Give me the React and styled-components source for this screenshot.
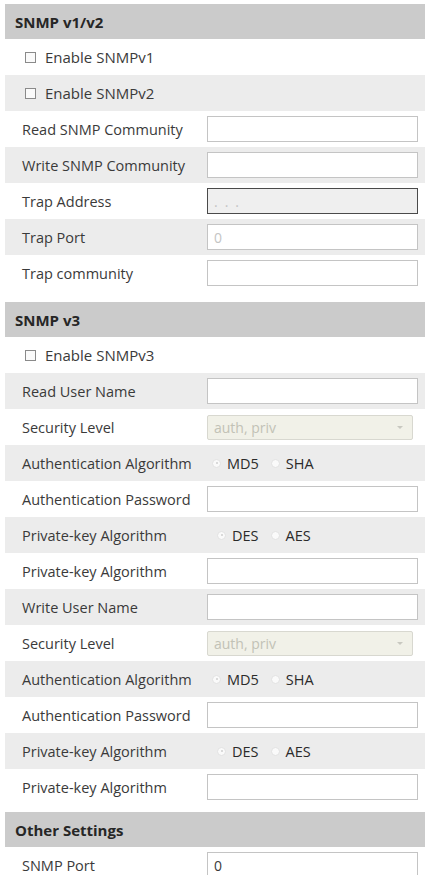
import React from "react";
import styled, { createGlobalStyle } from "styled-components";

const GlobalStyle = createGlobalStyle`
  body {
    margin: 0;
    background: #ffffff;
    font-family: "Open Sans", "Noto Sans", sans-serif;
    color: #3a3a3a;
  }
`;

const Page = styled.div`
  width: 420px;
  padding: 4px 0 0 5px;
  display: flex;
  flex-direction: column;
`;

const Section = styled.section`
  display: flex;
  flex-direction: column;
  margin-bottom: ${(p) => p.gap || 8}px;
`;

const Header = styled.div`
  height: 35px;
  display: flex;
  align-items: center;
  padding-left: 10px;
  background: #cbcbcb;
  font-size: 15px;
  font-weight: 700;
  color: #262626;
`;

const Row = styled.div`
  height: 36px;
  display: grid;
  grid-template-columns: 185px 211px;
  align-items: center;
  padding-left: 17px;
  background: ${(p) => (p.shaded ? "#ececec" : "#ffffff")};
  font-size: 14.5px;
`;

const CheckRow = styled.label`
  height: 36px;
  display: flex;
  align-items: center;
  gap: 9px;
  padding-left: 20px;
  background: ${(p) => (p.shaded ? "#ececec" : "#ffffff")};
  font-size: 15px;
  color: #3a3a3a;
`;

const Box = styled.span`
  width: 11px;
  height: 11px;
  border: 1px solid #8a8a8a;
  background: #fafafa;
  box-sizing: border-box;
`;

const Label = styled.span`
  white-space: nowrap;
`;

const Field = styled.div`
  height: 26px;
  box-sizing: border-box;
  border: 1px solid ${(p) => (p.dark ? "#4a4a4a" : "#c4c4c4")};
  background: ${(p) => (p.dark ? "#efefef" : "#ffffff")};
  display: flex;
  align-items: center;
  padding-left: 6px;
  font-size: 14px;
  color: ${(p) => (p.muted ? "#c4c4c4" : "#3a3a3a")};
  letter-spacing: ${(p) => (p.dots ? "7px" : "0")};
`;

const Select = styled.div`
  height: 25px;
  width: 206px;
  box-sizing: border-box;
  border: 1px solid #d8d8d0;
  border-radius: 2px;
  background: #f1f1e8;
  display: flex;
  align-items: center;
  justify-content: space-between;
  padding: 0 9px 0 6px;
  font-size: 14px;
  color: #c2c2b6;
`;

const Arrow = styled.span`
  width: 0;
  height: 0;
  border-left: 3px solid transparent;
  border-right: 3px solid transparent;
  border-top: 3px solid #c8c8c0;
`;

const Radios = styled.div`
  display: flex;
  align-items: center;
  gap: 6px;
  font-size: 14.5px;
  color: #2a2a2a;
  padding-left: ${(p) => p.indent || 5}px;
`;

const Dot = styled.span`
  width: 9px;
  height: 9px;
  border-radius: 50%;
  border: 1px solid #e2e2e2;
  background: #fafafa;
  box-sizing: border-box;
  position: relative;
  &::after {
    content: "";
    display: ${(p) => (p.on ? "block" : "none")};
    position: absolute;
    left: 2.5px;
    top: 2.5px;
    width: 2px;
    height: 2px;
    border-radius: 50%;
    background: #cfcfcf;
  }
`;

const Option = styled.span`
  margin-right: 6px;
`;

function RadioPair({ a, b, indent }) {
  return (
    <Radios indent={indent}>
      <Dot on />
      <Option>{a}</Option>
      <Dot />
      <Option>{b}</Option>
    </Radios>
  );
}

function UserBlock({ title }) {
  return (
    <>
      <Row shaded>
        <Label>{title}</Label>
        <Field />
      </Row>
      <Row>
        <Label>Security Level</Label>
        <Select>
          auth, priv
          <Arrow />
        </Select>
      </Row>
      <Row shaded>
        <Label>Authentication Algorithm</Label>
        <RadioPair a="MD5" b="SHA" />
      </Row>
      <Row>
        <Label>Authentication Password</Label>
        <Field />
      </Row>
      <Row shaded>
        <Label>Private-key Algorithm</Label>
        <RadioPair a="DES" b="AES" indent={10} />
      </Row>
      <Row>
        <Label>Private-key Algorithm</Label>
        <Field />
      </Row>
    </>
  );
}

export default function App() {
  return (
    <Page>
      <GlobalStyle />
      <Section gap={11}>
        <Header>SNMP v1/v2</Header>
        <CheckRow>
          <Box />
          Enable SNMPv1
        </CheckRow>
        <CheckRow shaded>
          <Box />
          Enable SNMPv2
        </CheckRow>
        <Row>
          <Label>Read SNMP Community</Label>
          <Field />
        </Row>
        <Row shaded>
          <Label>Write SNMP Community</Label>
          <Field />
        </Row>
        <Row>
          <Label>Trap Address</Label>
          <Field dark muted dots>
            ...
          </Field>
        </Row>
        <Row shaded>
          <Label>Trap Port</Label>
          <Field muted>0</Field>
        </Row>
        <Row>
          <Label>Trap community</Label>
          <Field />
        </Row>
      </Section>

      <Section gap={7}>
        <Header>SNMP v3</Header>
        <CheckRow>
          <Box />
          Enable SNMPv3
        </CheckRow>
        <UserBlock title="Read User Name" />
        <UserBlock title="Write User Name" />
      </Section>

      <Section>
        <Header>Other Settings</Header>
        <Row>
          <Label>SNMP Port</Label>
          <Field>0</Field>
        </Row>
      </Section>
    </Page>
  );
}
